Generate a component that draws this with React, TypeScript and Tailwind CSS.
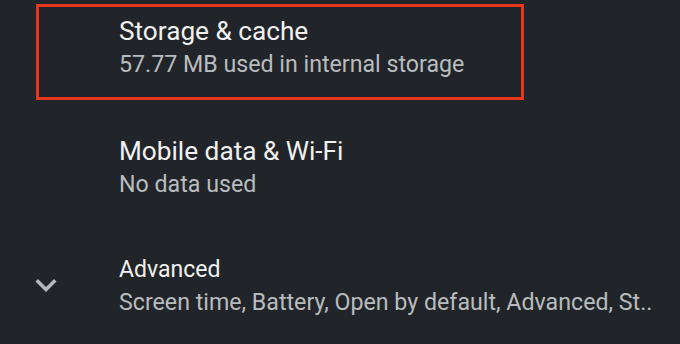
import React from "react";

export default function App() {
  return (
    <div
      className="w-[680px] h-[344px] overflow-hidden bg-[#212529] flex flex-col"
      style={{ fontFamily: "Roboto, 'Noto Sans', sans-serif" }}
    >
      {/* Storage & cache (highlighted) */}
      <div className="mt-[4px] ml-[36px] w-[488px] h-[96px] border-[3px] border-[#e8361c] pt-[8px] pl-[80px] flex flex-col">
        <div className="text-[26.2px] leading-[32px] text-[#f1f1f1] whitespace-nowrap">Storage &amp; cache</div>
        <div className="mt-[1px] text-[23.2px] leading-[32px] text-[#b9bcbf] whitespace-nowrap">
          57.77 MB used in internal storage
        </div>
      </div>

      {/* Mobile data & Wi-Fi */}
      <div className="mt-[35px] pl-[119px] flex flex-col">
        <div className="text-[26.2px] leading-[32px] text-[#f1f1f1] whitespace-nowrap">Mobile data &amp; Wi-Fi</div>
        <div className="mt-[1px] text-[23.2px] leading-[32px] text-[#b9bcbf] whitespace-nowrap">No data used</div>
      </div>

      {/* Advanced */}
      <div className="mt-[54px] flex items-start">
        <div className="ml-[25px] mt-[10px] w-[42px] h-[42px] shrink-0">
          <svg viewBox="0 0 24 24" width="42" height="42" fill="#b5b8bb">
            <path d="M16.59 8.59L12 13.17 7.41 8.59 6 10l6 6 6-6z" />
          </svg>
        </div>
        <div className="ml-[52px] flex flex-col">
          <div className="text-[23px] leading-[32px] text-[#f1f1f1] whitespace-nowrap">Advanced</div>
          <div className="text-[23.2px] leading-[32px] text-[#b9bcbf] whitespace-nowrap">
            Screen time, Battery, Open by default, Advanced, St..
          </div>
        </div>
      </div>
    </div>
  );
}
